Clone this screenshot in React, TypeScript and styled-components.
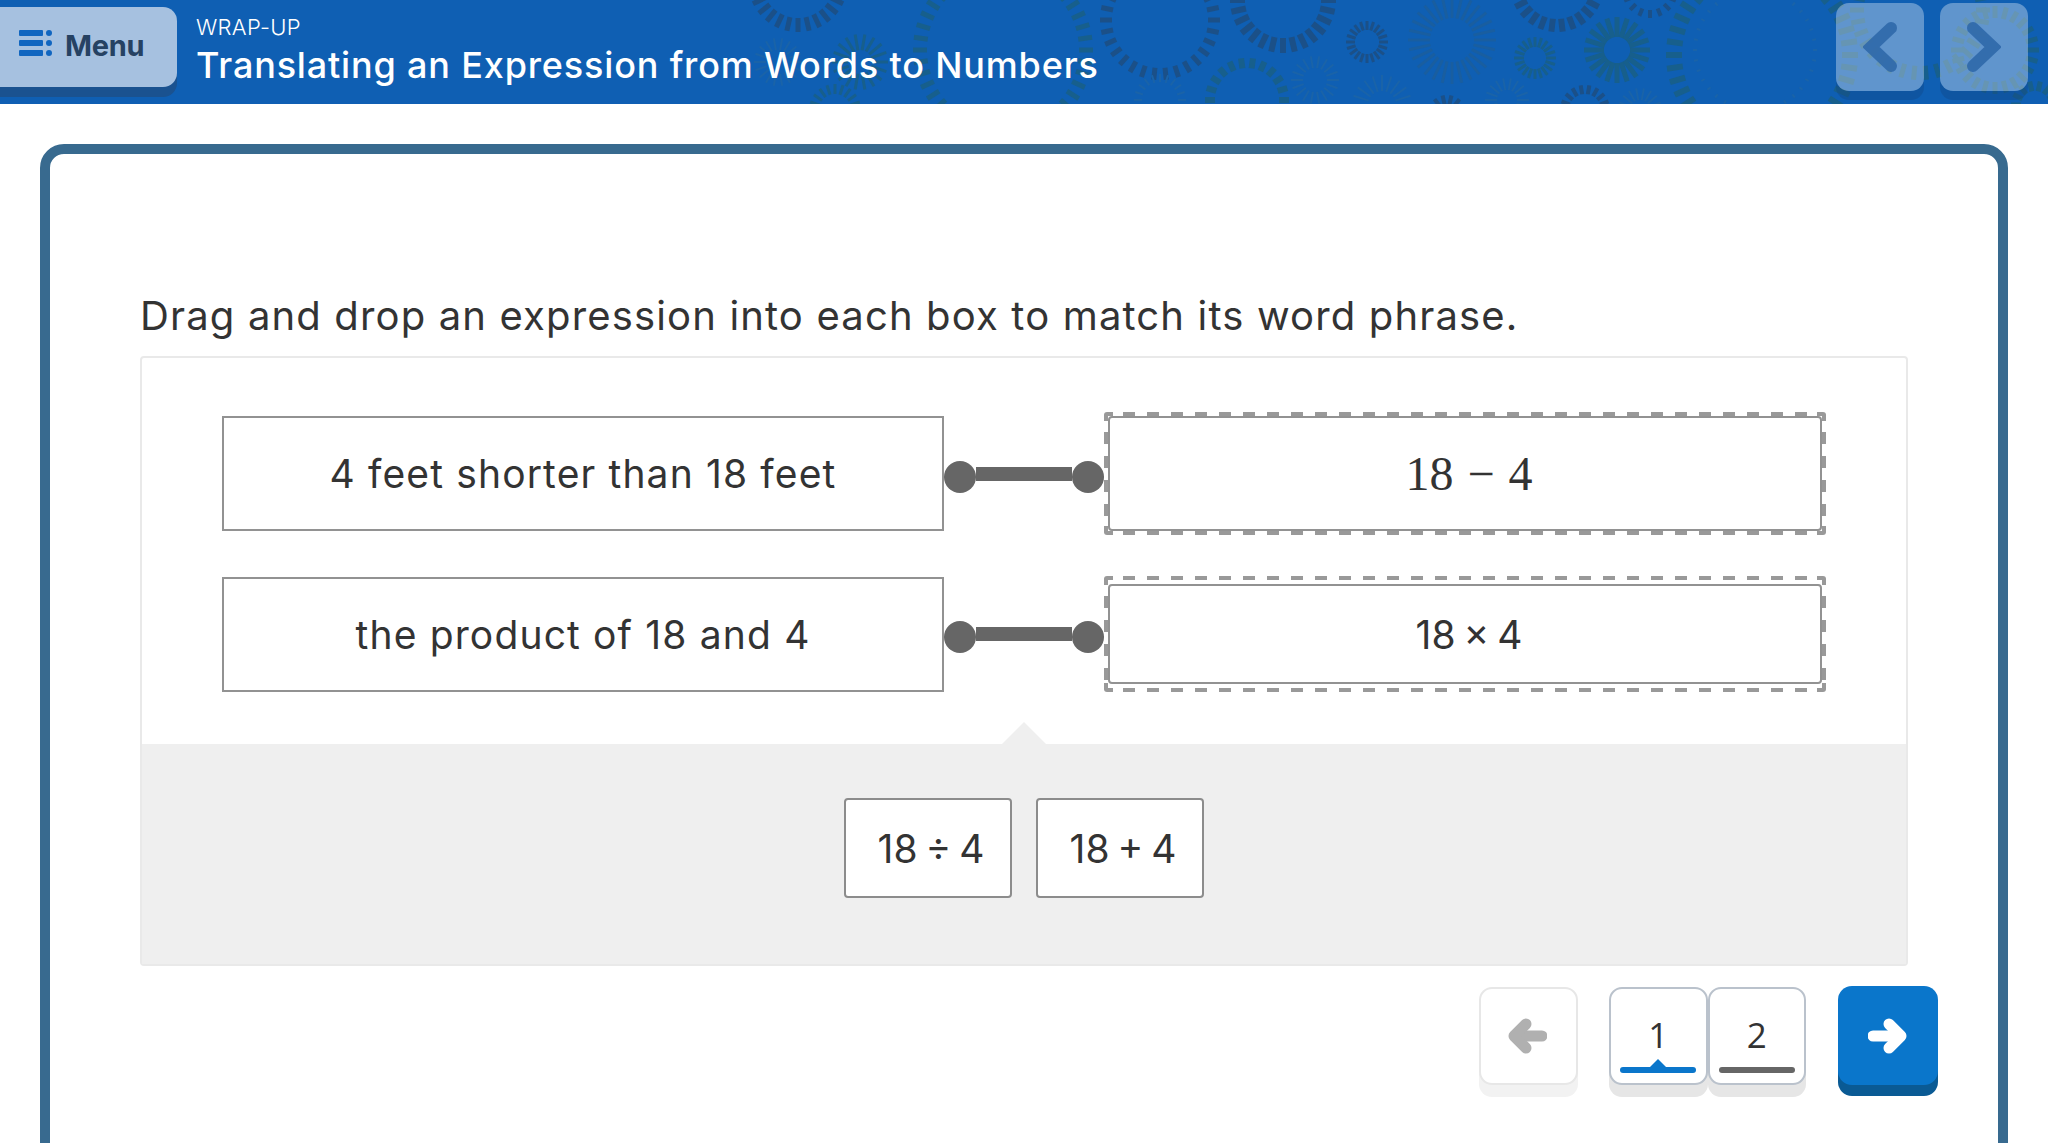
import styled, { createGlobalStyle } from 'styled-components'

const GlobalStyle = createGlobalStyle`
  html, body {
    margin: 0;
    height: 100%;
    overflow: hidden;
    background: #fff;
  }
  body {
    font-family: Inter, "Liberation Sans", sans-serif;
    color: #333;
  }
  * {
    box-sizing: border-box;
  }
`

const NAVY = '#1b5088'
const TEAL = '#175f8c'
const FAINT = '#1a63a8'

type Ring = { x: number; y: number; r1: number; r2: number; n: number; w: number; c: string }

const RINGS: Ring[] = [
  { x: 798, y: -18, r1: 36, r2: 50, n: 28, w: 5, c: NAVY },
  { x: 778, y: 62, r1: 12, r2: 24, n: 18, w: 2, c: FAINT },
  { x: 860, y: 62, r1: 12, r2: 28, n: 18, w: 3, c: TEAL },
  { x: 835, y: 110, r1: 16, r2: 26, n: 20, w: 3, c: TEAL },
  { x: 1003, y: 50, r1: 76, r2: 90, n: 44, w: 5, c: TEAL },
  { x: 1160, y: 20, r1: 48, r2: 60, n: 30, w: 5, c: NAVY },
  { x: 1160, y: 100, r1: 18, r2: 26, n: 20, w: 2, c: FAINT },
  { x: 1283, y: 0, r1: 38, r2: 53, n: 28, w: 6, c: NAVY },
  { x: 1247, y: 100, r1: 32, r2: 42, n: 22, w: 6, c: TEAL },
  { x: 1315, y: 80, r1: 12, r2: 24, n: 18, w: 2, c: FAINT },
  { x: 1367, y: 42, r1: 12, r2: 21, n: 20, w: 3, c: NAVY },
  { x: 1382, y: 105, r1: 14, r2: 30, n: 20, w: 2, c: FAINT },
  { x: 1452, y: 40, r1: 22, r2: 44, n: 28, w: 3, c: '#195ea0' },
  { x: 1447, y: 115, r1: 10, r2: 20, n: 14, w: 4, c: NAVY },
  { x: 1507, y: 100, r1: 10, r2: 22, n: 18, w: 2, c: FAINT },
  { x: 1535, y: 58, r1: 11, r2: 21, n: 20, w: 3, c: TEAL },
  { x: 1557, y: -15, r1: 34, r2: 47, n: 26, w: 6, c: NAVY },
  { x: 1585, y: 110, r1: 16, r2: 25, n: 18, w: 4, c: NAVY },
  { x: 1617, y: 50, r1: 13, r2: 33, n: 20, w: 5, c: TEAL },
  { x: 1640, y: 110, r1: 10, r2: 22, n: 18, w: 2, c: FAINT },
  { x: 1650, y: -10, r1: 20, r2: 28, n: 16, w: 4, c: NAVY },
  { x: 1762, y: 55, r1: 80, r2: 96, n: 44, w: 6, c: TEAL },
  { x: 1755, y: 50, r1: 58, r2: 62, n: 36, w: 2, c: FAINT },
  { x: 1920, y: 10, r1: 56, r2: 70, n: 34, w: 5, c: TEAL },
  { x: 1995, y: 50, r1: 32, r2: 44, n: 24, w: 5, c: TEAL },
  { x: 2035, y: 105, r1: 14, r2: 24, n: 14, w: 5, c: TEAL },
]

function HeaderPattern() {
  return (
    <PatternSvg viewBox="0 0 2048 104" width="2048" height="104">
      {RINGS.map((ring, i) => (
        <g key={i} stroke={ring.c} strokeWidth={ring.w}>
          {Array.from({ length: ring.n }, (_, k) => {
            const a = (k / ring.n) * Math.PI * 2
            return (
              <line
                key={k}
                x1={ring.x + Math.cos(a) * ring.r1}
                y1={ring.y + Math.sin(a) * ring.r1}
                x2={ring.x + Math.cos(a) * ring.r2}
                y2={ring.y + Math.sin(a) * ring.r2}
              />
            )
          })}
        </g>
      ))}
    </PatternSvg>
  )
}

const Page = styled.div`
  height: 100vh;
  overflow: hidden;
`

const Header = styled.header`
  position: relative;
  height: 104px;
  background: #0f5fb3;
  display: flex;
  align-items: flex-start;
  overflow: hidden;
`

const PatternSvg = styled.svg`
  position: absolute;
  left: 0;
  top: 0;
`

const MenuButton = styled.div`
  position: relative;
  width: 177px;
  height: 80px;
  margin-top: 7px;
  padding: 0 0 4px 19px;
  display: flex;
  align-items: center;
  gap: 13px;
  background: #a6c1e0;
  border-radius: 0 14px 14px 0;
  box-shadow: 0 10px 0 #1a5290;
  color: #264263;
  font-size: 29px;
  font-weight: 700;
  letter-spacing: -0.3px;

  svg {
    margin-top: -4px;
  }
`

const TitleBlock = styled.div`
  position: relative;
  margin-left: 19px;
  padding-top: 14px;
  color: #fff;
`

const Eyebrow = styled.div`
  font-size: 22px;
  font-weight: 300;
  line-height: 27px;
  letter-spacing: 0.3px;
`

const Title = styled.div`
  font-size: 36px;
  font-weight: 500;
  line-height: 48px;
  letter-spacing: 0.83px;
  white-space: nowrap;
`

const HeaderNav = styled.div`
  position: relative;
  margin-left: auto;
  margin-right: 20px;
  margin-top: 3px;
  display: flex;
  gap: 16px;
`

const HeaderNavButton = styled.div`
  width: 88px;
  height: 88px;
  border-radius: 13px;
  background: rgba(255, 255, 255, 0.34);
  box-shadow: 0 9px 0 rgba(16, 70, 130, 0.35);
  display: flex;
  align-items: center;
  justify-content: center;
`

const Main = styled.main`
  padding: 40px 40px 0;
`

const Card = styled.section`
  height: 1100px;
  border: 10px solid #386a8f;
  border-radius: 24px;
  padding: 132px 60px 0 90px;
`

const Instruction = styled.h1`
  margin: 0 0 10px;
  font-size: 40px;
  font-weight: 400;
  line-height: 60px;
  letter-spacing: 1.15px;
  color: #333;
  white-space: nowrap;
`

const Panel = styled.div`
  width: 1768px;
  border: 2px solid #e9e9e9;
  border-radius: 4px;
`

const Matches = styled.div`
  padding: 54px 80px 52px;
  display: flex;
  flex-direction: column;
  gap: 41px;
`

const MatchRow = styled.div`
  display: flex;
  align-items: center;
`

const Phrase = styled.div`
  width: 722px;
  height: 115px;
  border: 2px solid #929292;
  display: flex;
  align-items: center;
  justify-content: center;
  font-size: 39px;
  letter-spacing: 1.15px;
  color: #333;
  white-space: nowrap;
`

const Connector = styled.div`
  width: 160px;
  display: flex;
  align-items: center;
`

const Dot = styled.div`
  width: 32px;
  height: 32px;
  flex: none;
  margin-top: 6px;
  border-radius: 50%;
  background: #666;
`

const Bar = styled.div`
  flex: 1;
  height: 14px;
  background: #666;
`

const DASH = '#999'
const corner = (x: string, y: string, w: number, h: number) =>
  `linear-gradient(${DASH}, ${DASH}) ${x} ${y} / ${w}px ${h}px no-repeat`

const DropZone = styled.div<{ $loose?: boolean }>`
  width: 722px;
  height: ${({ $loose }) => ($loose ? '116px' : '123px')};
  padding: ${({ $loose }) => ($loose ? '8px 4px' : '4px')};
  border-radius: 3px;
  background: ${corner('left', 'top', 9, 4)}, ${corner('left', 'top', 4, 9)}, ${corner('right', 'top', 9, 4)},
    ${corner('right', 'top', 4, 9)}, ${corner('left', 'bottom', 9, 4)}, ${corner('left', 'bottom', 4, 9)},
    ${corner('right', 'bottom', 9, 4)}, ${corner('right', 'bottom', 4, 9)},
    linear-gradient(to right, ${DASH} 50%, transparent 50%) 19px top / 24px 4px repeat-x,
    linear-gradient(to right, ${DASH} 50%, transparent 50%) 19px bottom / 24px 4px repeat-x,
    linear-gradient(to bottom, ${DASH} 50%, transparent 50%) left 20px / 4px 24px repeat-y,
    linear-gradient(to bottom, ${DASH} 50%, transparent 50%) right 20px / 4px 24px repeat-y;
`

const Placed = styled.div`
  height: 100%;
  border: 2px solid #929292;
  border-radius: 4px;
  background: #fff;
  display: flex;
  align-items: center;
  justify-content: center;
  padding-left: 8px;
  font-size: 39px;
  word-spacing: -3px;
  color: #333;
`

const MathText = styled.span`
  font-family: 'Liberation Serif', serif;
  font-size: 48px;
  word-spacing: 2px;
`

const Tray = styled.div`
  position: relative;
  height: 220px;
  padding-top: 54px;
  background: #efefef;
  display: flex;
  justify-content: center;
  gap: 24px;

  &::before {
    content: '';
    position: absolute;
    left: 50%;
    top: -22px;
    margin-left: -22px;
    border-left: 22px solid transparent;
    border-right: 22px solid transparent;
    border-bottom: 22px solid #efefef;
  }
`

const Chip = styled.div`
  width: 168px;
  height: 100px;
  padding-left: 6px;
  border: 2px solid #8c8c8c;
  border-radius: 4px;
  background: #fff;
  display: flex;
  align-items: center;
  justify-content: center;
  font-size: 39px;
  word-spacing: -3px;
  color: #333;
`

const BottomNav = styled.nav`
  margin-top: 20px;
  display: flex;
  justify-content: flex-end;
  align-items: flex-start;
`

const BackButton = styled.div`
  width: 99px;
  height: 98px;
  margin-top: 1px;
  margin-right: 31px;
  padding-right: 3px;
  border: 2px solid #e7e7e7;
  border-radius: 13px;
  background: #fff;
  box-shadow: 0 12px 0 #f2f2f2;
  display: flex;
  align-items: center;
  justify-content: center;
`

const Pager = styled.div`
  display: flex;
  margin-top: 1px;
  margin-right: 32px;
`

const PageTab = styled.div`
  width: 98.5px;
  height: 98px;
  padding: 24px 10px 0;
  border: 2px solid #bac2cc;
  border-radius: 13px;
  background: #fff;
  box-shadow: 0 12px 0 #e6e6e6;
  display: flex;
  flex-direction: column;
  align-items: center;
  font-family: 'Open Sans', 'Liberation Sans', sans-serif;
  font-size: 35px;
  line-height: 44px;
  color: #333;
`

const Underline = styled.div<{ $active?: boolean }>`
  position: relative;
  width: 76px;
  height: 6px;
  margin-top: 10px;
  border-radius: 3px;
  background: ${({ $active }) => ($active ? '#0a76cb' : '#666')};

  &::before {
    content: '';
    display: ${({ $active }) => ($active ? 'block' : 'none')};
    position: absolute;
    left: 50%;
    top: -8px;
    margin-left: -8px;
    border-left: 8px solid transparent;
    border-right: 8px solid transparent;
    border-bottom: 8px solid #0a76cb;
  }
`

const NextButton = styled.div`
  width: 100px;
  height: 99px;
  border-radius: 14px;
  background: #0a76cb;
  box-shadow: 0 11px 0 #0a5a94;
  display: flex;
  align-items: center;
  justify-content: center;
`

function MenuIcon() {
  return (
    <svg width="33" height="26" viewBox="0 0 33 26" fill="#1166c0">
      <rect x="0" y="0" width="24" height="6" rx="1" />
      <rect x="0" y="10" width="24" height="6" rx="1" />
      <rect x="0" y="20" width="24" height="6" rx="1" />
      <circle cx="30" cy="3" r="3" />
      <circle cx="30" cy="13" r="3" />
      <circle cx="30" cy="23" r="3" />
    </svg>
  )
}

function Chevron({ dir }: { dir: 'left' | 'right' }) {
  return (
    <svg width="34" height="50" viewBox="0 0 34 50" fill="none">
      <path
        d={dir === 'left' ? 'M28 6 L8 25 L28 44' : 'M6 6 L26 25 L6 44'}
        stroke="#2f68aa"
        strokeOpacity="0.9"
        strokeWidth="12"
        strokeLinecap="round"
        strokeLinejoin="miter"
      />
    </svg>
  )
}

function Arrow({ dir, color }: { dir: 'left' | 'right'; color: string }) {
  return (
    <svg width="40" height="36" viewBox="0 0 40 36" fill="none" stroke={color} strokeLinecap="round">
      {dir === 'left' ? (
        <>
          <path d="M8 18 H35" strokeWidth="11" />
          <path d="M19 6 L7 18 L19 30" strokeWidth="11" strokeLinejoin="round" />
        </>
      ) : (
        <>
          <path d="M5 18 H32" strokeWidth="11" />
          <path d="M21 6 L33 18 L21 30" strokeWidth="11" strokeLinejoin="round" />
        </>
      )}
    </svg>
  )
}

function Link() {
  return (
    <Connector>
      <Dot />
      <Bar />
      <Dot />
    </Connector>
  )
}

export default function App() {
  return (
    <Page>
      <GlobalStyle />
      <Header>
        <HeaderPattern />
        <MenuButton>
          <MenuIcon />
          Menu
        </MenuButton>
        <TitleBlock>
          <Eyebrow>WRAP-UP</Eyebrow>
          <Title>Translating an Expression from Words to Numbers</Title>
        </TitleBlock>
        <HeaderNav>
          <HeaderNavButton>
            <Chevron dir="left" />
          </HeaderNavButton>
          <HeaderNavButton>
            <Chevron dir="right" />
          </HeaderNavButton>
        </HeaderNav>
      </Header>
      <Main>
        <Card>
          <Instruction>Drag and drop an expression into each box to match its word phrase.</Instruction>
          <Panel>
            <Matches>
              <MatchRow>
                <Phrase>4 feet shorter than 18 feet</Phrase>
                <Link />
                <DropZone>
                  <Placed>
                    <MathText>18 − 4</MathText>
                  </Placed>
                </DropZone>
              </MatchRow>
              <MatchRow>
                <Phrase>the product of 18 and 4</Phrase>
                <Link />
                <DropZone $loose>
                  <Placed>18 × 4</Placed>
                </DropZone>
              </MatchRow>
            </Matches>
            <Tray>
              <Chip>18 ÷ 4</Chip>
              <Chip>18 + 4</Chip>
            </Tray>
          </Panel>
          <BottomNav>
            <BackButton>
              <Arrow dir="left" color="#b0b0b0" />
            </BackButton>
            <Pager>
              <PageTab>
                1
                <Underline $active />
              </PageTab>
              <PageTab>
                2
                <Underline />
              </PageTab>
            </Pager>
            <NextButton>
              <Arrow dir="right" color="#fff" />
            </NextButton>
          </BottomNav>
        </Card>
      </Main>
    </Page>
  )
}
